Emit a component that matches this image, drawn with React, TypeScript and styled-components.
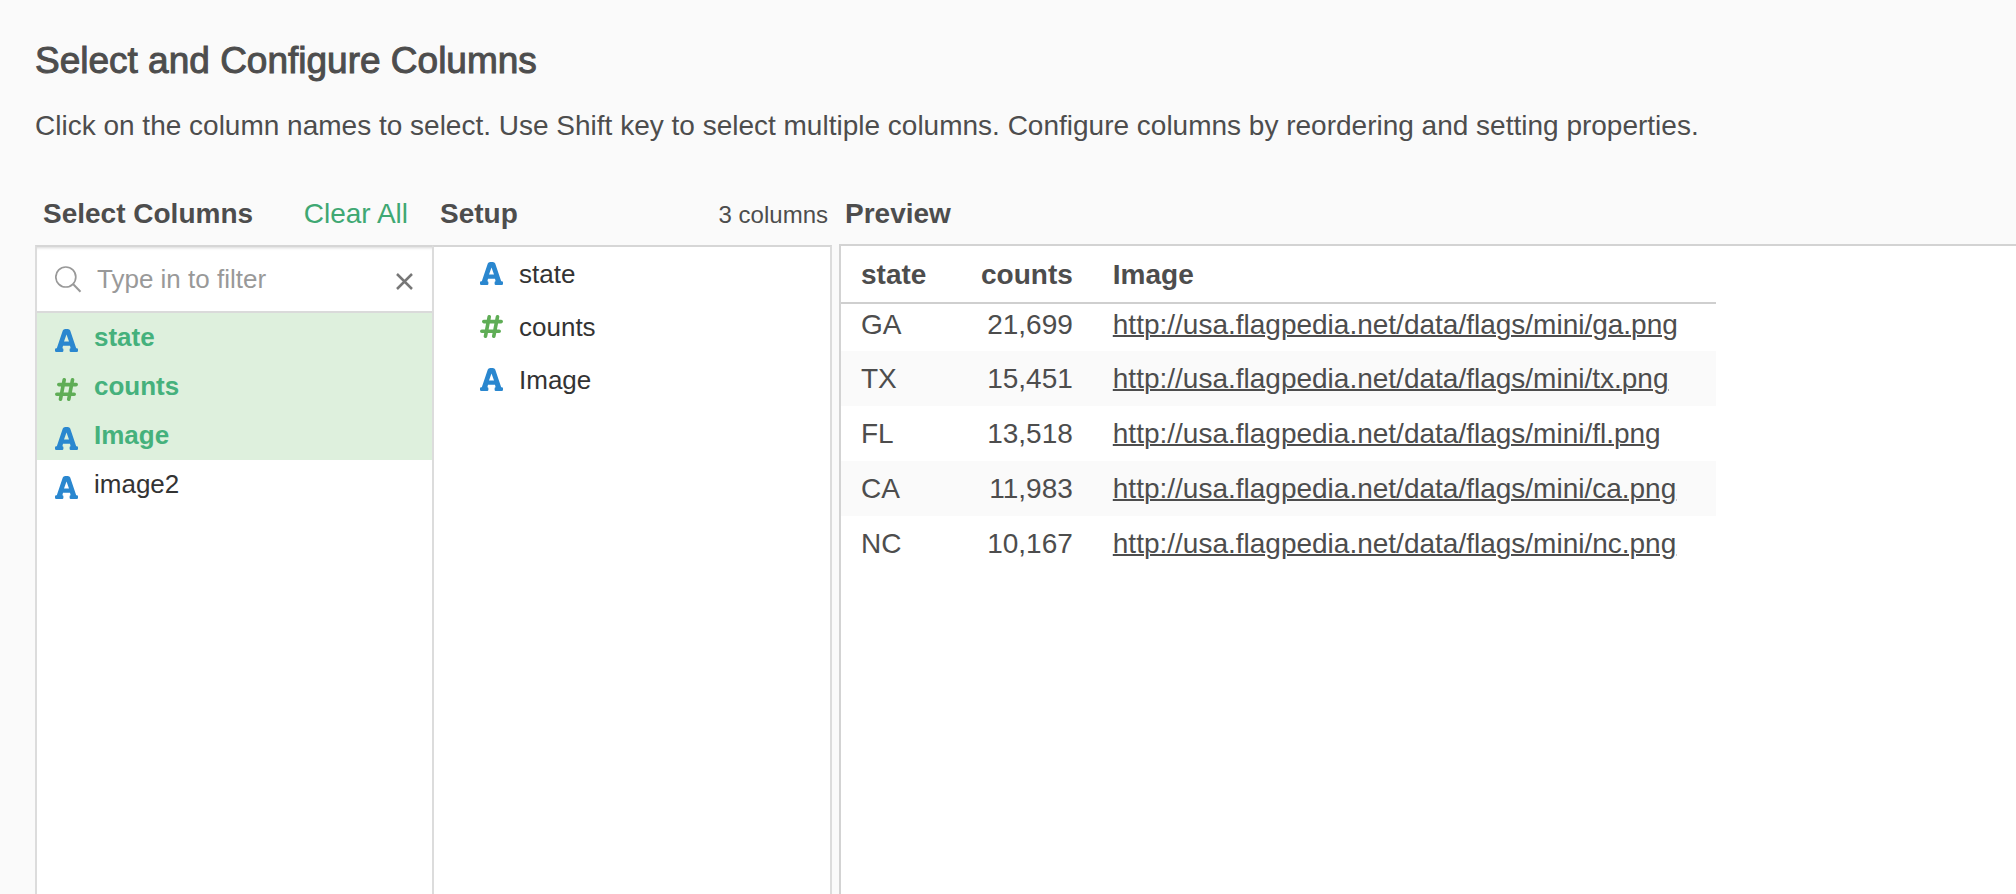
import React, { useState } from "react";
import styled, { createGlobalStyle, css } from "styled-components";

const GlobalStyle = createGlobalStyle`
  *, *::before, *::after { box-sizing: border-box; }
  html { background: #fafafa; }
  body {
    margin: 0;
    color: #4d4d4d;
    font-family: "Helvetica Neue", "Liberation Sans", Arial, sans-serif;
    font-size: 28px;
  }
  button, input { font: inherit; color: inherit; }
`;

const Page = styled.main`
  display: flex;
  flex-direction: column;
  min-height: 100vh;
  padding-left: 35px;
  background: #fafafa;
`;

const Intro = styled.header`
  padding: 40px 35px 0 0;
`;

const Title = styled.h1`
  margin: 0;
  font-size: 37px;
  line-height: 42px;
  font-weight: 400;
  -webkit-text-stroke: 1px currentColor;
`;

const Description = styled.p`
  margin: 24px 0 0;
  line-height: 40px;
`;

const Panels = styled.div`
  display: flex;
  flex: 1;
  margin-top: 40px;
`;

const Panel = styled.section`
  display: flex;
  flex-direction: column;
  flex: 0 0 399px;
  min-width: 0;
`;

/* Shares its left border with the panel before it. */
const JoinedPanel = styled(Panel)`
  flex-basis: 400px;
  margin-left: -2px;
`;

const PreviewPanel = styled(Panel)`
  flex: 1 1 0;
  margin-left: 7px;
`;

const PanelHeader = styled.div`
  display: flex;
  justify-content: space-between;
  align-items: baseline;
  height: 59px;
  padding: 10px 4px 0 8px;
  line-height: 36px;
`;

const PreviewHeader = styled(PanelHeader)`
  height: 58px;
  padding-left: 6px;
`;

const Heading = styled.h2`
  margin: 0;
  font-size: inherit;
  font-weight: 700;
`;

const ClearButton = styled.button`
  padding: 0;
  margin-right: 22px;
  border: 0;
  background: none;
  color: #3fa873;
  cursor: pointer;
`;

const Count = styled.span`
  font-size: 24px;
`;

const Box = styled.div`
  flex: 1;
  border: 2px solid;
  border-color: #d6d6d6 #dcdcdc;
  border-bottom: 0;
  background: #fff;
`;

const PreviewBox = styled(Box)`
  border-color: #d3d3d3;
  border-right: 0;
  overflow-x: auto;
`;

const Search = styled.div`
  display: flex;
  align-items: center;
  height: 66px;
  padding: 0 18px;
  border-bottom: 2px solid #dadada;
  box-shadow: inset 0 3px 3px -2px #d8d8d8;
`;

const SearchInput = styled.input`
  flex: 1;
  min-width: 0;
  margin-left: 14px;
  padding: 0;
  border: 0;
  outline: 0;
  background: transparent;
  font-size: 26px;
  line-height: 32px;
  &::placeholder { color: #999; opacity: 1; }
`;

const IconButton = styled.button`
  display: flex;
  padding: 4px 0 0;
  border: 0;
  background: none;
  color: #777;
  cursor: pointer;
`;

const List = styled.ul`
  margin: 0;
  padding: 0;
  list-style: none;
  font-size: 26px;
  color: #333;
`;

const ColumnButton = styled.button<{ $selected: boolean }>`
  display: flex;
  align-items: center;
  gap: 16px;
  width: 100%;
  height: 49px;
  padding: 0 18px;
  border: 0;
  text-align: left;
  cursor: pointer;
  background: ${(p) => (p.$selected ? "#def0dd" : "transparent")};
  color: ${(p) => (p.$selected ? "#45b17c" : "#333")};
  font-weight: ${(p) => (p.$selected ? 700 : 400)};
  line-height: 49px;
  & > svg { margin-top: 6px; }
`;

const SetupItem = styled.li`
  display: flex;
  align-items: center;
  gap: 16px;
  height: 53px;
  padding-left: 46px;
  line-height: 53px;
  & > span { padding-top: 2px; }
`;

const Table = styled.table`
  border-collapse: separate;
  border-spacing: 0;
  white-space: nowrap;
`;

const Cell = css<{ $numeric?: boolean }>`
  padding: 0 20px;
  text-align: ${(p) => (p.$numeric ? "right" : "left")};
`;

const Th = styled.th<{ $numeric?: boolean; $width: number }>`
  ${Cell}
  min-width: ${(p) => p.$width}px;
  height: 58px;
  border-bottom: 2px solid #cfcfcf;
  font-weight: 700;
  line-height: 54px;
  padding-top: 2px;
`;

const Td = styled.td<{ $numeric?: boolean }>`
  ${Cell}
`;

const Row = styled.tr`
  height: 55px;
  line-height: 55px;
  &:nth-child(even) { background: #fafafa; }
  &:first-child { height: 47px; line-height: 41px; vertical-align: top; }
`;

const Link = styled.a`
  color: inherit;
  text-decoration: underline;
  text-decoration-thickness: 2px;
`;

const TextIcon = () => (
  <svg width="23" height="23" viewBox="0 0 23 23" fill="#2a87cf" aria-hidden="true">
    <path
      fillRule="evenodd"
      d="M10.200 0h2.600Q14.600 0 15.200 1.600L21.200 19.200h.6Q23 19.200 23 20.400v1.400Q23 23 21.800 23h-6Q14.600 23 14.600 21.800v-1.400q0-1.200 1-1.200L15 16.800H8l-.6 2.400q1 0 1 1.200v1.400Q8.400 23 7.200 23h-6Q0 23 0 21.800v-1.400Q0 19.200 1.200 19.200h.6L7.800 1.600Q8.400 0 10.200 0ZM11.500 5.600 9 12.600h5Z"
    />
  </svg>
);

const NumberIcon = () => (
  <svg
    width="23"
    height="23"
    viewBox="0 0 23 23"
    fill="none"
    stroke="#5fad56"
    strokeWidth="3.600"
    strokeLinecap="round"
    aria-hidden="true"
  >
    <path d="M9.200 1.800 5.500 21.200M17.500 1.800 13.800 21.200M3.800 6.600h17.400M1.800 16.200h17.400" />
  </svg>
);

const SearchIcon = () => (
  <svg width="28" height="28" viewBox="0 0 28 28" fill="none" stroke="#999" strokeWidth="1.700" aria-hidden="true">
    <circle cx="10.800" cy="12" r="10" />
    <path d="m18 19 7.500 7.800" strokeWidth="2" />
  </svg>
);

const CloseIcon = () => (
  <svg width="18" height="17" viewBox="0 0 18 17" stroke="currentColor" strokeWidth="2.500" aria-hidden="true">
    <path d="m1 1 15 15M16 1 1 16" />
  </svg>
);

type Kind = "text" | "number";
const columns: { name: string; kind: Kind }[] = [
  { name: "state", kind: "text" },
  { name: "counts", kind: "number" },
  { name: "Image", kind: "text" },
  { name: "image2", kind: "text" },
];

const rows = [
  ["GA", "21,699", "ga"],
  ["TX", "15,451", "tx"],
  ["FL", "13,518", "fl"],
  ["CA", "11,983", "ca"],
  ["NC", "10,167", "nc"],
];

const TypeIcon = ({ kind }: { kind: Kind }) => (kind === "number" ? <NumberIcon /> : <TextIcon />);

export default function App() {
  const [selected, setSelected] = useState(["state", "counts", "Image"]);
  const [filter, setFilter] = useState("");
  const toggle = (name: string) =>
    setSelected((s) => (s.includes(name) ? s.filter((n) => n !== name) : [...s, name]));
  const shown = columns.filter((c) => c.name.toLowerCase().includes(filter.toLowerCase()));
  const chosen = columns.filter((c) => selected.includes(c.name));

  return (
    <>
      <GlobalStyle />
      <Page>
        <Intro>
          <Title>Select and Configure Columns</Title>
          <Description>
            Click on the column names to select. Use Shift key to select multiple columns. Configure columns by
            reordering and setting properties.
          </Description>
        </Intro>
        <Panels>
          <Panel>
            <PanelHeader>
              <Heading>Select Columns</Heading>
              <ClearButton type="button" onClick={() => setSelected([])}>
                Clear All
              </ClearButton>
            </PanelHeader>
            <Box>
              <Search>
                <SearchIcon />
                <SearchInput
                  type="text"
                  aria-label="Filter columns"
                  placeholder="Type in to filter"
                  value={filter}
                  onChange={(e) => setFilter(e.target.value)}
                />
                <IconButton type="button" aria-label="Clear filter" onClick={() => setFilter("")}>
                  <CloseIcon />
                </IconButton>
              </Search>
              <List>
                {shown.map((c) => (
                  <li key={c.name}>
                    <ColumnButton
                      type="button"
                      $selected={selected.includes(c.name)}
                      aria-pressed={selected.includes(c.name)}
                      onClick={() => toggle(c.name)}
                    >
                      <TypeIcon kind={c.kind} />
                      <span>{c.name}</span>
                    </ColumnButton>
                  </li>
                ))}
              </List>
            </Box>
          </Panel>
          <JoinedPanel>
            <PanelHeader>
              <Heading>Setup</Heading>
              <Count>{chosen.length} columns</Count>
            </PanelHeader>
            <Box>
              <List>
                {chosen.map((c) => (
                  <SetupItem key={c.name}>
                    <TypeIcon kind={c.kind} />
                    <span>{c.name}</span>
                  </SetupItem>
                ))}
              </List>
            </Box>
          </JoinedPanel>
          <PreviewPanel>
            <PreviewHeader>
              <Heading>Preview</Heading>
            </PreviewHeader>
            <PreviewBox>
              <Table>
                <thead>
                  <tr>
                    <Th $width={120}>state</Th>
                    <Th $numeric $width={131}>counts</Th>
                    <Th $width={623}>Image</Th>
                  </tr>
                </thead>
                <tbody>
                  {rows.map(([state, count, file]) => (
                    <Row key={state}>
                      <Td>{state}</Td>
                      <Td $numeric>{count}</Td>
                      <Td>
                        <Link href={`http://usa.flagpedia.net/data/flags/mini/${file}.png`}>
                          {`http://usa.flagpedia.net/data/flags/mini/${file}.png`}
                        </Link>
                      </Td>
                    </Row>
                  ))}
                </tbody>
              </Table>
            </PreviewBox>
          </PreviewPanel>
        </Panels>
      </Page>
    </>
  );
}
